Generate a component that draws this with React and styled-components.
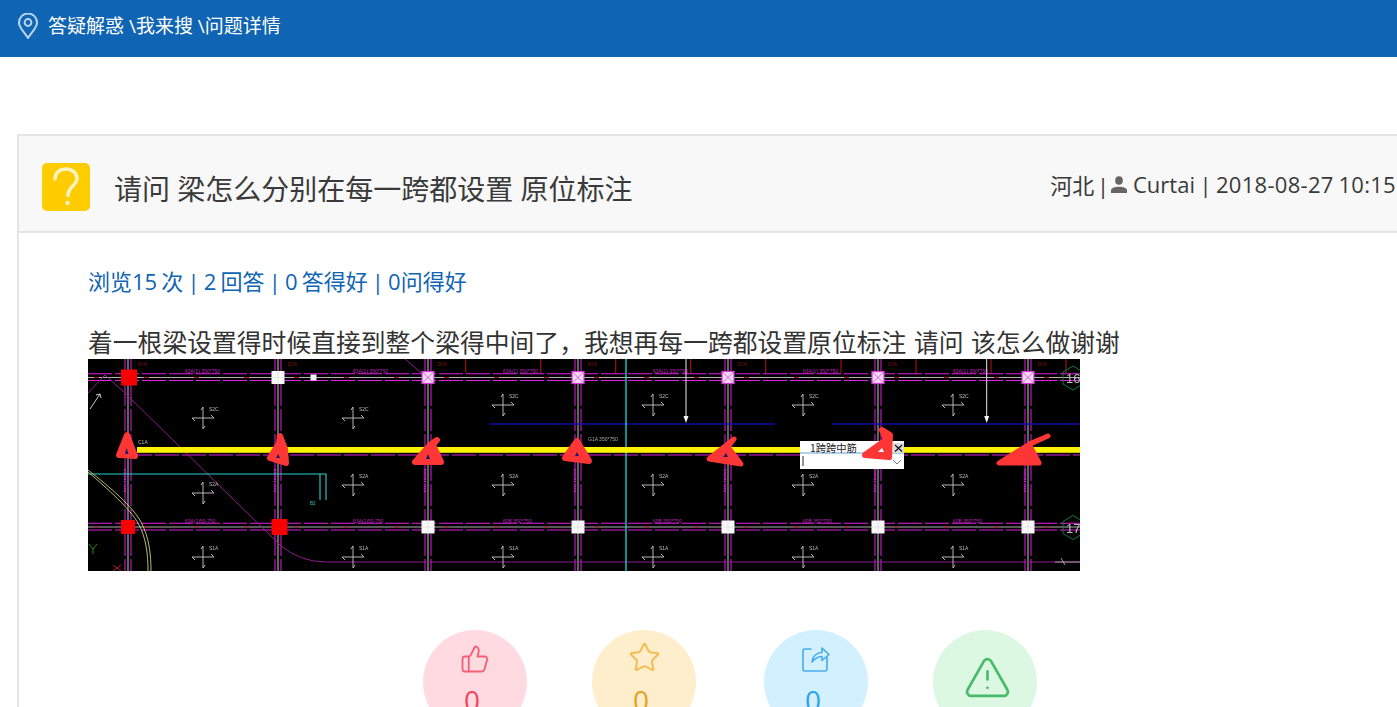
import React from "react";
import styled, { createGlobalStyle } from "styled-components";
import { ThumbsUp, Star, TriangleAlert } from "lucide-react";

const FONT = `"Open Sans", "Noto Sans CJK SC", sans-serif`;

const Global = createGlobalStyle`
  html, body { margin: 0; padding: 0; height: 707px; overflow: hidden; background: #fff; }
  body { font-family: ${FONT}; color: #333; }
`;

const Page = styled.div`
  width: 1397px;
  height: 707px;
  overflow: hidden;
`;
const TopBar = styled.header`
  height: 57px;
  background: #0f64b3;
  display: flex;
  align-items: center;
  padding: 0 0 6px 18px;
  box-sizing: border-box;
  gap: 10px;
  color: #fff;
  font-size: 19px;
`;
const Crumb = styled.span`
  white-space: pre;
  line-height: 26px;
  margin-top: 1px;
`;
const Card = styled.section`
  width: 1400px;
  margin: 77px 0 0 17px;
  border: 2px solid #e5e5e5;
  box-sizing: border-box;
`;
const CardHead = styled.div`
  height: 88px;
  background: #f8f8f8;
  border-bottom: 2px solid #e5e5e5;
  box-sizing: content-box;
  display: flex;
  align-items: center;
  justify-content: space-between;
  padding: 7px 19px 0 23px;
`;
const TitleWrap = styled.div`
  display: flex;
  align-items: center;
  gap: 24px;
`;
const Badge = styled.div`
  width: 48px;
  height: 48px;
  border-radius: 5px;
  background: #ffcc00;
  display: flex;
  align-items: center;
  justify-content: center;
`;
const Title = styled.h1`
  margin: 0;
  padding-top: 2px;
  font-size: 28px;
  font-weight: 400;
  color: #3a3a3a;
  white-space: pre;
`;
const Meta = styled.div`
  display: flex;
  align-items: center;
  gap: 6px;
  font-size: 22px;
  color: #3a3a3a;
  white-space: pre;
  padding-bottom: 6px;
`;
const Region = styled.span`
  word-spacing: -3px;
  margin-right: -4px;
`;
const Author = styled.span`
  word-spacing: -1.3px;
`;
const Stamp = styled.span`
  letter-spacing: 0.3px;
`;
const Body = styled.div`
  padding: 31px 0 0 69px;
`;
const Stats = styled.div`
  font-size: 22px;
  line-height: 34px;
  color: #0f64b3;
  white-space: pre;
  word-spacing: -1.55px;
`;
const Desc = styled.div`
  margin-top: 27px;
  font-size: 24.8px;
  line-height: 34px;
  color: #333;
  white-space: pre;
  word-spacing: 1.15px;
`;
const CadSvg = styled.svg`
  display: block;
  width: 992px;
  height: 212px;
  background: #000;
`;
const CadLayer = styled.g`
  filter: blur(0.25px);
`;
const Actions = styled.div`
  display: flex;
  gap: 65px;
  margin: 59px 0 0 335px;
`;
const Circle = styled.div`
  width: 104px;
  height: 104px;
  border-radius: 50%;
  flex: none;
  background: ${(p) => p.$bg};
  color: ${(p) => p.$fg};
  margin-left: ${(p) => p.$shift || 0}px;
  display: flex;
  flex-direction: column;
  align-items: center;
`;
const IconSlot = styled.div`
  height: 57px;
  box-sizing: border-box;
  padding: ${(p) => p.$top}px 0 0 ${(p) => p.$left || 0}px;
  display: flex;
  justify-content: center;
`;
const Count = styled.span`
  font-size: 28px;
  line-height: 26px;
  margin-right: 6px;
  color: ${(p) => p.$fg};
`;

const COLS = [40, 190, 340, 490, 640, 790, 940];
const MAG = "#e21fe2";

function Cross({ x, y, label }) {
  return (
    <g stroke="#c8c8c8" strokeWidth="0.9" fill="none">
      <path d={`M${x} ${y - 11}V${y + 11}M${x - 11} ${y}H${x + 11}M${x - 11} ${y}l3 3M${x + 11} ${y}l-3 -3M${x} ${y + 11}l2 -3M${x} ${y - 11}l-2 3`} />
      <text x={x + 6} y={y - 7} fontSize="5" fill="#bbb" stroke="none" fontFamily="Liberation Sans, sans-serif">{label}</text>
    </g>
  );
}

function Node({ x, y, kind, size }) {
  const s = size / 2;
  if (kind === "red") return <rect x={x - s} y={y - s} width={size} height={size} fill="#f60000" />;
  if (kind === "white") return (
    <g>
      <rect x={x - s} y={y - s} width={size} height={size} fill="#f8f8f8" />
      <path d={`M${x} ${y - s}V${y + s}M${x - s} ${y}H${x + s}`} stroke="#d8d8d8" strokeWidth="0.6" />
    </g>
  );
  return (
    <g>
      <rect x={x - s} y={y - s} width={size} height={size} fill="#f8d8f8" stroke="#d838d8" strokeWidth="1.2" />
      <path d={`M${x - s} ${y - s}L${x + s} ${y + s}M${x + s} ${y - s}L${x - s} ${y + s}`} stroke="#c050c0" strokeWidth="0.8" />
    </g>
  );
}

function Scribble({ d, w = 5 }) {
  return <path d={d} fill="#ff3636" stroke="#ff3636" strokeWidth={w} strokeLinejoin="round" strokeLinecap="round" />;
}

function HRow({ y }) {
  return (
    <g>
      <path d={`M0 ${y - 3.7}H992M0 ${y + 3}H992`} stroke={MAG} strokeWidth="1.1" strokeDasharray="24 3" />
      <path d={`M0 ${y}H992`} stroke="#b0b0b0" strokeWidth="1" />
      <path d={`M6 ${y}H992`} stroke="#b01030" strokeWidth="1.2" strokeDasharray="5 45" />
    </g>
  );
}

function CadDrawing() {
  const crosses = [];
  [40, 190, 340, 490, 640, 790].forEach((c, i) => {
    const x = c + 75;
    crosses.push([x, 46 + (i < 2 ? 13 : 0), "S2C"], [x, i === 0 ? 134 : 126, "S2A"], [x, 198, "S1A"]);
  });
  return (
    <CadSvg viewBox="0 0 992 212" xmlns="http://www.w3.org/2000/svg">
      <CadLayer>
        {[452.7, 527.7, 602.7, 677.7, 753, 828, 903, 978, 377.7].map((x) => (
          <path key={x} d={`M${x} 0V14`} stroke="#b01010" strokeWidth="1.1" />
        ))}
        <HRow y={18.5} />
        <HRow y={168} />
        <path d="M40 96H992" stroke={MAG} strokeWidth="1" strokeDasharray="24 3" />
        {COLS.map((x) => (
          <g key={x}>
            <path d={`M${x - 3} 0V212M${x + 3} 0V212`} stroke={MAG} strokeWidth="1" strokeDasharray="22 3" />
            <path d={`M${x} 0V212`} stroke="#a5a5a5" strokeWidth="1.2" />
            <path d={`M${x - 3} 110V134`} stroke="#b52ab5" strokeWidth="2.4" strokeDasharray="1.4 1" />
          </g>
        ))}
        {[97, 265, 415, 565, 715, 865].map((x, i) => (
          <g key={x}>
            <text x={x} y={14} fontSize="5" fill="#c020c0" fontFamily="Liberation Sans, sans-serif">63A(1) 350*750</text>
            <text x={x} y={164} fontSize="5" fill="#c020c0" fontFamily="Liberation Sans, sans-serif">{i < 2 ? "63A(1)50-750" : "60B 350*750"}</text>
          </g>
        ))}
        <path d="M0 34L17 16L37 34L192 186Q212 203 238 203H992" stroke="#8e1c8e" strokeWidth="1" fill="none" />
        <path d="M317 0L339 19" stroke="#8e1c8e" strokeWidth="1" />
        <path d="M2 50L12 35M12 35l-4 1M12 35l1 4" stroke="#ddd" strokeWidth="0.9" fill="none" />
        <path d="M0 115H238V141M232 115V141" stroke="#26d0d0" strokeWidth="1.1" fill="none" />
        <text x="222" y="146" fontSize="4.5" fill="#26c8c8" fontFamily="Liberation Sans, sans-serif">B2</text>
        <path d="M0 113C20 130 42 150 50 164C58 178 60 195 60 212" stroke="#e8e88a" strokeWidth="0.8" fill="none" />
        <path d="M0 111C22 128 45 148 53 163C61 178 63 195 63 212" stroke="#e8e88a" strokeWidth="0.8" fill="none" />
        <path d="M1 185L5 190L9 185M5 190V195" stroke="#18a018" strokeWidth="0.9" fill="none" />
        <path d="M25 206L33 212M33 206L25 212" stroke="#cc2020" strokeWidth="0.9" />
        <path d="M402 65H687M744 65H992" stroke="#0c0ca6" strokeWidth="1.6" fill="none" />
        <path d="M538 0V212" stroke="#22dada" strokeWidth="1.3" />
        <rect x="49" y="88" width="943" height="5.8" fill="#fff200" />
        {crosses.map(([x, y, l], i) => <Cross key={i} x={x} y={y} label={l} />)}
        {[598, 898.7].map((x) => (
          <g key={x}>
            <path d={`M${x} 0V58`} stroke="#e8e8e8" strokeWidth="1" />
            <path d={`M${x - 2.5} 57H${x + 2.5}L${x} 64Z`} fill="#f4f4f4" />
          </g>
        ))}
        <Node x={41} y={18.5} kind="red" size={16} />
        <Node x={190} y={18.5} kind="white" size={13} />
        <rect x="222.5" y="15.5" width="6" height="6" fill="#f4f4f4" />
        {[340, 490, 640, 790, 940].map((x) => <Node key={x} x={x} y={18.5} kind="pink" size={12} />)}
        <Node x={40} y={168} kind="red" size={14} />
        <Node x={191.5} y={168} kind="red" size={16} />
        {[340, 490, 640, 790, 940].map((x) => <Node key={x} x={x} y={168} kind="white" size={13} />)}
        <path d="M973 199L977 206M967 203H992" stroke="#bbb" strokeWidth="0.8" fill="none" />
        {[[19, "16"], [168.5, "17"]].map(([y, t]) => (
          <g key={t}>
            <path d={`M985 ${y - 12}l10 6v12l-10 6l-10 -6v-12Z`} fill="none" stroke="#0d8a3a" strokeWidth="0.9" />
            <text x="978" y={y + 5} fontSize="13" fill="#bbb" fontFamily="Liberation Sans, sans-serif">{t}</text>
          </g>
        ))}
        <text x="50" y="85" fontSize="5" fill="#bbb" fontFamily="Liberation Sans, sans-serif">C1A</text>
        <text x="500" y="82" fontSize="5" fill="#aaa" fontFamily="Liberation Sans, sans-serif">G1A 350*750</text>
        {COLS.map((x) => <text key={x} x={x + 10} y={7} fontSize="4.5" fill="#901010" fontFamily="Liberation Sans, sans-serif">DYA</text>)}
      </CadLayer>

      <rect x="712" y="82" width="104" height="28" fill="#fff" />
      <path d="M712 94H816" stroke="#3a8ccc" strokeWidth="0.8" />
      <text x="722" y="92.500" fontSize="10.300" fill="#222" fontFamily="Noto Sans CJK SC, sans-serif">1跨跨中筋</text>
      <rect x="805" y="84" width="11" height="10" fill="#dcdcdc" />
      <path d="M807 86L814 92.500M814 86L807 92.500" stroke="#111" strokeWidth="1.200" />
      <path d="M715 97V107" stroke="#111" strokeWidth="0.900" />
      <path d="M805 101L809 105L813 101" stroke="#555" strokeWidth="0.800" fill="none" />

      <Scribble w={6} d="M39 76L31 96L47 97Z" />
      <path d="M38.500 89L37 95H40.500Z" fill="#1a1a66" />
      <Scribble w={6} d="M192 77L191 84L182 99L198 104L197 90Z" />
      <path d="M190 95L188 99H192Z" fill="#1a1a66" />
      <Scribble w={6} d="M349 81L342 86L327 103L353 103L345 86Z" />
      <path d="M340 95L338 100H342Z" fill="#1a1a66" />
      <Scribble w={6} d="M489 82L477 99L501 102Z" />
      <path d="M489 93L487 97H491Z" fill="#1a1a66" />
      <Scribble w={5} d="M646 80L621 100L653 105L640 88Z" />
      <path d="M638 94L635 98H640Z" fill="#1a1a66" />
      <Scribble w={6} d="M794 71L802 76L801 98L777 96L798 81Z" />
      <path d="M794 89L790 93H796Z" fill="#fff" />
      <Scribble w={5} d="M960 77L940 86L911 104L951 104L941 85Z" />
    </CadSvg>
  );
}

const PinIcon = () => (
  <svg width="20" height="26" viewBox="0 0 20 26" fill="none" stroke="#b9d5ee" strokeWidth="2">
    <path d="M10 25C7 20 1 15 1 9.500a9 9 0 0 1 18 0C19 15 13 20 10 25Z" />
    <circle cx="10" cy="9.500" r="3.400" />
  </svg>
);
const QuestionIcon = () => (
  <svg width="28" height="40" viewBox="0 0 28 40" fill="none" stroke="#fff3c4" strokeWidth="3.400">
    <path d="M3 12C3 5.500 8 2 14 2s11 3.800 11 9.500c0 7-9 8-9 17" strokeLinecap="round" />
    <circle cx="15.500" cy="36" r="2.200" fill="#fff3c4" stroke="none" />
  </svg>
);
const UserIcon = () => (
  <svg width="16" height="17" viewBox="0 0 16 17" fill="#666">
    <ellipse cx="8" cy="4.500" rx="3.800" ry="4.300" />
    <path d="M0 17v-2.500c0-2.500 3.500-3.700 8-3.700s8 1.200 8 3.700V17Z" />
  </svg>
);
const ShareIcon = () => (
  <svg width="28" height="26" viewBox="0 0 28 26" fill="none" stroke="#45acf0" strokeWidth="1.600" strokeLinejoin="round" strokeLinecap="round">
    <path d="M9 3H3a2 2 0 0 0-2 2v18a2 2 0 0 0 2 2h20a2 2 0 0 0 2-2V11" />
    <path d="M10 16c.5-6 5-9.500 10-9.500V2l7 6.500-7 6V10.500c-4 0-7 2-10 5.500Z" />
  </svg>
);

export default function App() {
  return (
    <Page>
      <Global />
      <TopBar>
        <PinIcon />
        <Crumb>答疑解惑 \我来搜 \问题详情</Crumb>
      </TopBar>
      <Card>
        <CardHead>
          <TitleWrap>
            <Badge><QuestionIcon /></Badge>
            <Title>请问 梁怎么分别在每一跨都设置 原位标注</Title>
          </TitleWrap>
          <Meta>
            <Region>河北 |</Region>
            <UserIcon />
            <Author>Curtai | <Stamp>2018-08-27 10:15</Stamp></Author>
          </Meta>
        </CardHead>
        <Body>
          <Stats>浏览15 次 | 2 回答 | 0 答得好 | 0问得好</Stats>
          <Desc>着一根梁设置得时候直接到整个梁得中间了，我想再每一跨都设置原位标注 请问 该怎么做谢谢</Desc>
          <CadDrawing />
          <Actions>
            <Circle $bg="#ffdbe1" $fg="#f4607a">
              <IconSlot $top={14}><ThumbsUp size={30} strokeWidth={1.5} /></IconSlot>
              <Count $fg="#ef4560">0</Count>
            </Circle>
            <Circle $bg="#ffeecc" $fg="#f5bb55">
              <IconSlot $top={11}><Star size={33} strokeWidth={1.5} /></IconSlot>
              <Count $fg="#e8a11f">0</Count>
            </Circle>
            <Circle $bg="#d3f0ff" $fg="#45acf0" $shift={3}>
              <IconSlot $top={16}><ShareIcon /></IconSlot>
              <Count $fg="#2ba3ef">0</Count>
            </Circle>
            <Circle $bg="#dcf8e3" $fg="#48bb68">
              <IconSlot $top={23} $left={4}><TriangleAlert size={49} strokeWidth={1.3} /></IconSlot>
            </Circle>
          </Actions>
        </Body>
      </Card>
    </Page>
  );
}
